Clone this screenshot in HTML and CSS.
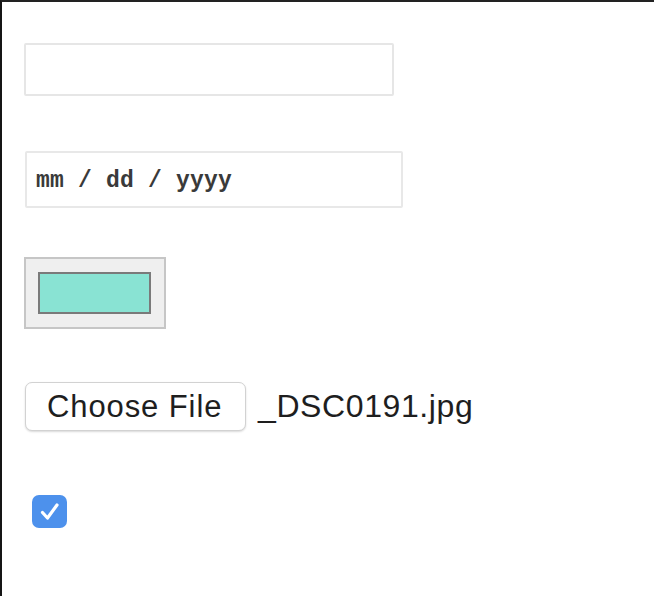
FILE: index.html
```html
<!DOCTYPE html>
<html>
<head>
<meta charset="utf-8">
<link rel="stylesheet" href="styles.css">
</head>
<body>
<div class="page">
  <div class="text-field"></div>
  <div class="date-field"><span class="date-text">mm / dd / yyyy</span></div>
  <div class="color-field"><div class="swatch"></div></div>
  <div class="file-row">
    <div class="file-btn">Choose File</div>
    <span class="file-name">_DSC0191.jpg</span>
  </div>
  <div class="checkbox">
    <svg width="24" height="22" viewBox="0 0 24 22"><path d="M4.5 11.5 L9.5 17 L19 4" fill="none" stroke="#fff" stroke-width="3.2" stroke-linecap="round" stroke-linejoin="round"/></svg>
  </div>
</div>
</body>
</html>
```
FILE: styles.css
```css
html, body {
  margin: 0;
  padding: 0;
  background: #fff;
}
.page {
  box-sizing: border-box;
  width: 654px;
  height: 596px;
  border-top: 2px solid #222;
  border-left: 2px solid #151515;
  display: flex;
  flex-direction: column;
  align-items: flex-start;
  font-family: "Liberation Sans", Arial, sans-serif;
}
.text-field {
  box-sizing: border-box;
  margin: 41px 0 0 22px;
  width: 370px;
  height: 53px;
  border: 2px solid #e6e6e6;
  border-radius: 2px;
  background: #fff;
}
.date-field {
  box-sizing: border-box;
  margin: 55px 0 0 23px;
  width: 378px;
  height: 57px;
  border: 2px solid #e8e8e8;
  border-radius: 2px;
  display: flex;
  align-items: center;
  padding-left: 9px;
  padding-top: 2px;
}
.date-text {
  font-family: "Liberation Mono", "Courier New", monospace;
  font-weight: bold;
  font-size: 23px;
  color: #3a3a3a;
  letter-spacing: 0.2px;
}
.color-field {
  box-sizing: border-box;
  margin: 49px 0 0 22px;
  width: 142px;
  height: 72px;
  background: #efefef;
  border: 2px solid #c6c6c6;
  padding: 13px 0 0 12px;
}
.swatch {
  box-sizing: border-box;
  width: 113px;
  height: 42px;
  background: #89e3d3;
  border: 2px solid #7a7a7a;
}
.file-row {
  margin: 53px 0 0 23px;
  display: flex;
  align-items: center;
}
.file-btn {
  box-sizing: border-box;
  width: 221px;
  height: 49px;
  border: 1px solid #d2d2d2;
  border-radius: 7px;
  background: #fff;
  box-shadow: 0 1px 2px rgba(0,0,0,0.15);
  font-size: 31px;
  letter-spacing: 0.9px;
  color: #1e1e1e;
  display: flex;
  align-items: center;
  padding-left: 21px;
  padding-top: 1px;
}
.file-name {
  margin-left: 12px;
  font-size: 32px;
  letter-spacing: 0.6px;
  color: #1e1e1e;
}
.checkbox {
  margin: 64px 0 0 30px;
  width: 35px;
  height: 33px;
  border-radius: 7px;
  background: #4d91ec;
  display: flex;
  align-items: center;
  justify-content: center;
}
.checkbox svg {
  display: block;
}
```
